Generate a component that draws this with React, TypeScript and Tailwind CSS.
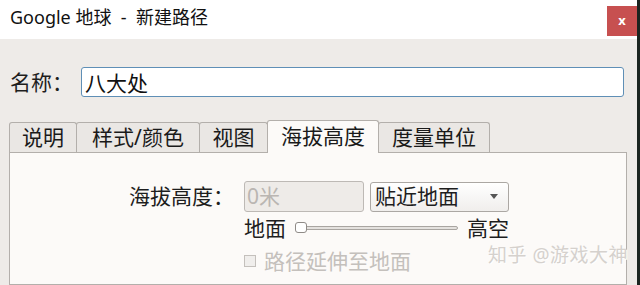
import { useState } from 'react'

const cjk = "font-['Noto_Sans','Noto_Sans_CJK_SC',sans-serif]"

const tabs = [
  { label: '说明', w: 'w-[68px]' },
  { label: '样式/颜色', w: 'w-[124px]' },
  { label: '视图', w: 'w-[69px]' },
  { label: '海拔高度', w: 'w-[112px]' },
  { label: '度量单位', w: 'w-[112px]' },
]

function Tabs({ active, onPick }: { active: number; onPick: (i: number) => void }) {
  return (
    <div className="ml-[9px] flex h-[32px] items-end">
      {tabs.map((t, i) => {
        const on = i === active
        return (
          <button
            key={t.label}
            onClick={() => onPick(i)}
            className={
              on
                ? `${t.w} relative z-10 -mb-px -ml-px flex h-[33px] items-center justify-center rounded-t-[3px] border border-b-0 border-[#b3afab] bg-[#fcfaf8] pb-[2px] text-[21px] leading-none text-[#1a1a1a]`
                : `${t.w} -ml-px flex h-[30px] items-center justify-center rounded-t-[3px] border border-b-0 border-[#b3afab] bg-[#eae7e4] text-[21px] leading-none text-[#1a1a1a] first:ml-0`
            }
          >
            {t.label}
          </button>
        )
      })}
    </div>
  )
}

function AltitudePanel() {
  const [extend, setExtend] = useState(false)
  return (
    <div className="relative ml-[9px] w-[618px] flex-1 border border-[#b3afab] bg-[#fcfaf8]">
      <div className="grid grid-cols-[226px_auto] gap-x-[8px] pt-[28px] text-[21px] leading-none">
        <div className="flex h-[31px] items-center justify-end pr-[2px] text-[#1e1e1e]">海拔高度：</div>
        <div className="flex items-center gap-[6px]">
          <div className="flex h-[31px] w-[120px] items-center rounded-[3px] border border-[#bdb9b5] bg-[#eeebe8] pl-[2px] text-[#bab6b2]">
            0米
          </div>
          <div className="flex h-[30px] w-[139px] items-center justify-between rounded-[3px] border border-[#aba7a3] bg-gradient-to-b from-white to-[#f0eeec] pl-[4px] pr-[10px] text-[#1e1e1e]">
            贴近地面
            <svg width="8" height="5" viewBox="0 0 8 5">
              <path d="M0 0h8L4 5z" fill="#555" />
            </svg>
          </div>
        </div>

        <div />
        <div className="mt-[3px] flex h-[26px] items-center text-[#1e1e1e]">
          <span>地面</span>
          <div className="relative ml-[9px] flex h-[12px] w-[163px] items-center">
            <div className="h-[4px] w-full rounded-full border border-[#a9a5a1] bg-[#e4e1de]" />
            <div className="absolute left-0 top-0 h-[11px] w-[12px] rounded-[3px] border border-[#8f8b87] bg-white" />
          </div>
          <span className="ml-[9px]">高空</span>
        </div>

        <div />
        <label className="mt-[8px] flex h-[24px] cursor-pointer items-center text-[#c4c0bc]">
          <span
            onClick={() => setExtend((v) => !v)}
            className="mr-[8px] h-[12px] w-[12px] border border-[#c4c0bc] bg-[#f0eeec]"
          >
            {extend && <span className="block h-full w-full bg-[#c4c0bc]" />}
          </span>
          路径延伸至地面
        </label>
      </div>

      {/* 水印 */}
      <div className="absolute left-[478px] top-[93px] whitespace-nowrap text-[19px] leading-none tracking-[0.5px] text-[#d5d1cd] [text-shadow:1px_1px_0_#ffffff]">
        知乎 @游戏大神
      </div>
    </div>
  )
}

export default function App() {
  const [tab, setTab] = useState(3)
  const [name, setName] = useState('八大处')

  return (
    <div className={`flex h-[285px] w-[640px] overflow-hidden ${cjk}`}>
      <div className="flex w-[637px] flex-col">
        <div className="flex h-[39px] shrink-0 items-start justify-between bg-white">
          <div className="pl-[10px] pt-[6px] text-[18px] leading-[22px] text-[#111]">
            Google 地球&nbsp; - &nbsp;新建路径
          </div>
          <button className="mt-[6px] flex h-[30px] w-[30px] items-center justify-center bg-[#c75050] pb-[2px] text-[13px] font-bold leading-none text-white">
            x
          </button>
        </div>

        <div className="flex flex-1 flex-col bg-[#eeebe8]">
          <div className="mt-[28px] flex h-[30px] items-center">
            <span className="w-[81px] pl-[10px] text-[21px] leading-none text-[#1e1e1e]">名称：</span>
            <input
              value={name}
              onChange={(e) => setName(e.target.value)}
              className="h-[30px] w-[543px] rounded-[3px] border border-[#5f8fb6] bg-white px-[3px] text-[21px] leading-none text-[#111] outline-none"
            />
          </div>

          <div className="mt-[23px]">
            <Tabs active={tab} onPick={setTab} />
          </div>
          <AltitudePanel />
        </div>
      </div>
      <div className="w-[3px] bg-[#1b2420]" />
    </div>
  )
}
